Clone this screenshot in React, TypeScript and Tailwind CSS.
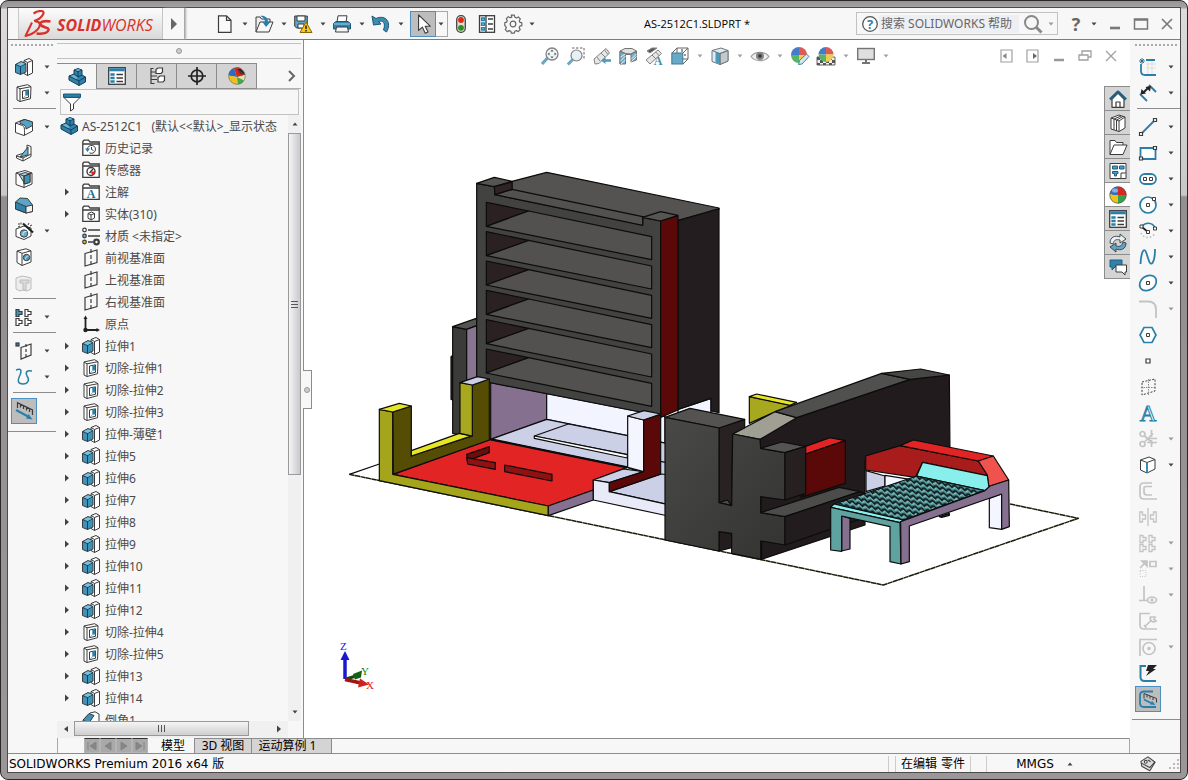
import clsx from "clsx";
import { useState, type ReactNode } from "react";

const INK = "#3c3c3c";
const BLUE = "#2a7fa8";
const PALE = "#c4c4c4";

// All glyphs are drawn on an 18x18 grid.
const glyphs: Record<string, ReactNode> = {
  extrude: (
    <g stroke={INK} strokeLinejoin="round">
      <path d="M9 2.500l5-2 3.500 2v12.500l-5 2.500-3.500-2z" fill="#fff" />
      <path d="M9 2.500l3.500 2v13M12.500 4.500l5-2" fill="none" />
      <path d="M.5 6.500L6 3.500l5 2v8.500l-5.500 2.500-5-2z" fill="#3f93b9" />
      <path d="M.5 6.500l5 2 5.500-3M5.500 8.500v8" fill="none" stroke="#123f56" />
      <path d="M1.800 6.400L6 4.300l4 1.400-4.300 2.200z" fill="#7cc0dc" stroke="none" />
    </g>
  ),
  cut: (
    <g stroke={INK} strokeLinejoin="round">
      <path d="M2 3L12.500.700l3.500 2-.5 12L5 17.500l-3-1.500z" fill="#fff" />
      <path d="M2 3l3 1.800 11-2.100M5 4.800v12.500" fill="none" />
      <path d="M7.500 7l6-1.200v7.500l-6 1.400z" fill="#fff" />
      <path d="M10.300 6.800v5l3-.6V6z" fill={BLUE} stroke="none" />
      <path d="M8 14l2.300-2.200 3-.6" fill="none" stroke="#8fb9cb" />
    </g>
  ),
  fillet: (
    <g stroke={INK} strokeLinejoin="round">
      <path d="M.5 5L9 1.500 17.500 4v9L9 17.500l-8.500-3z" fill="#fff" />
      <path d="M.5 5l7 2.500c2 1 2 2 2 9.500" fill="none" />
      <path d="M5 3.200l5-1.700 7.500 2.500v3.500L11 11c0-3-1-4-6-5.500z" fill="#56a3c5" />
    </g>
  ),
  rib: (
    <g stroke={INK} strokeLinejoin="round">
      <path d="M12 1l4 1.500v10L8 17l-6.500-3v-2.500L12 8z" fill="#fff" />
      <path d="M1.500 12L8 14l8-4M8 14v3" fill="none" />
      <path d="M13 3v8l-8 2z" fill="#67b1d0" />
    </g>
  ),
  shell: (
    <g stroke={INK} strokeLinejoin="round">
      <path d="M1 3l9-2.500L17 3v11l-8 3.500-8-3z" fill="#fff" />
      <path d="M4 4.500l6-2L15 4v8l-5 2z" fill="#a9d4e6" />
      <path d="M9 6l6-2v8.500l-6 1.500z" fill="#3f93b9" />
      <path d="M1 3l8 3v11.500M9 6l8-3" fill="none" />
    </g>
  ),
  draft: (
    <g stroke={INK} strokeLinejoin="round">
      <path d="M.5 6L5 2l7.500.5L17.500 9v6.500L11 17 .5 13z" fill="#5ba6c8" />
      <path d="M.5 6L11 10.500V17L.5 13z" fill="#2f83aa" />
      <path d="M11 10.500l6.500-1.500v6.500L11 17z" fill="#f1f1f1" />
    </g>
  ),
  wizard: (
    <g stroke={INK} strokeLinejoin="round">
      <path d="M1 7l8-3 7 2v8l-7 3.500-8-3z" fill="#fff" />
      <circle cx="9" cy="11.500" r="3.700" fill="#67b1d0" />
      <path d="M8 13a3 3 0 0 1 3.500-3.500" fill="none" stroke="#e6f5fb" />
      <path d="M8 1.500l10 9" strokeWidth="2.200" stroke="#222" />
      <path d="M3 2h2M6 .5v2M14 1l-1 2M17 3l-2 1M5 4l-2 1" />
    </g>
  ),
  hole: (
    <g stroke={INK} strokeLinejoin="round">
      <path d="M2 3L11 .800l5 2V14l-9 3.500-5-3z" fill="#fff" />
      <path d="M2 3l5 2.300 9-2.500M7 5.300v12" fill="none" />
      <circle cx="11.500" cy="9.500" r="3.200" fill="#4b9cc0" />
      <path d="M10.500 11.500a3 3 0 0 1 3-3.500" fill="none" stroke="#d6eef7" />
    </g>
  ),
  intersect: (
    <g stroke="#bdbdbd" fill="#ededed" strokeLinejoin="round">
      <path d="M1 4l6-2 5 1 4 1v11l-4 2-4-1-3 1-4-2z" />
      <path d="M5 6h9v3h-3v7H8V9H5z" fill="#d9d9d9" />
    </g>
  ),
  pattern: (
    <g stroke={INK} strokeWidth="1.200" fill="#fff">
      <path d="M1 1.500h3v2h3v3H4v2H1z" fill="#3f93b9" />
      <path d="M10 1.500h3v2h3v3h-3v2h-3zM1 10.500h3v2h3v3H4v2H1zM10 10.500h3v2h3v3h-3v2h-3z" />
    </g>
  ),
  refGeometry: (
    <g stroke={INK} fill="none" strokeWidth="1.200">
      <path d="M6 5.500l10-3.500v11L6 17z" />
      <path d="M11 2v15" strokeDasharray="3 2" />
      <rect x="1" y="1" width="3" height="3" fill={BLUE} />
    </g>
  ),
  curves: (
    <g fill="none" stroke={BLUE} strokeWidth="1.500">
      <path d="M1 2c5-2 6 0 4 5-3 6-2 9 3 9s7-4 4-8c-2-4 0-6 5-5" />
    </g>
  ),
  instant: (
    <g fill="none" stroke={INK} strokeWidth="1.200">
      <path d="M2.500 6V.8L17.500 8v5M5.500 2.500v3M8.500 4v3M11.500 5.500v3M14.500 7v3" />
      <path d="M1 8l13 7" stroke={BLUE} strokeWidth="2" />
      <path d="M17.500 17.500l-6.500-1 2.500-4.500z" fill={BLUE} stroke="none" />
    </g>
  ),
  part: (
    <g stroke="#153f57" strokeLinejoin="round">
      <path d="M1 8l5-2V2l4-1.500L14 2v5l3.500 2v5L11 17.500 1 12z" fill="#2f80aa" />
      <path d="M6 2l4 1.500L14 2M10 3.500V9l-4-3M10 9l4-2M1 8l10 5v4.500M11 13l6.500-4" fill="none" />
      <path d="M7 2l3-1 3 1-3 1zM2.500 8L6 6.700 10 10l-2 1z" fill="#6fb5d4" stroke="none" />
    </g>
  ),
  properties: (
    <g fill="none" stroke={INK} strokeWidth="1.300">
      <rect x=".7" y=".7" width="16.600" height="16.600" fill="#fff" />
      <path d="M1.300 2.800h15.400" stroke={BLUE} strokeWidth="3" />
      <path d="M3 7h3v1H3zM3 10.500h3v1H3zM3 14h3v1H3z" stroke={BLUE} />
      <path d="M8.500 7.500H15M8.500 11H15M8.500 14.500H15" />
    </g>
  ),
  config: (
    <g fill="#fff" stroke={INK} strokeWidth="1.200">
      <path d="M5.500 1.500H3v15h3.500M3 9h6M3 5h5M3 12.500h6" fill="none" />
      <path d="M8 2.500l2-1.500h4.500v4L13 6.500H8z" />
      <path d="M10 10.500L12 9h4.500v4.500L15 15h-5z" />
    </g>
  ),
  target: (
    <g fill="none" stroke="#222" strokeWidth="1.700">
      <circle cx="9" cy="9" r="5.800" />
      <path d="M9 0v18M0 9h18" />
    </g>
  ),
  ball: (
    <g>
      <path d="M9 9V.5A8.500 8.500 0 0 0 .7 8c3 1.500 5 1.500 8.300 1z" fill="#2f6fc4" />
      <path d="M9 9V.5A8.500 8.500 0 0 1 17.500 9z" fill="#d8281f" />
      <path d="M9 9h8.500A8.500 8.500 0 0 1 9 17.500z" fill="#33a24a" />
      <path d="M9 9v8.500A8.500 8.500 0 0 1 .6 8C4 9 6 9 9 9z" fill="#f1c21b" />
      <circle cx="9" cy="9" r="8.200" fill="none" stroke="#555" strokeWidth=".7" />
      <ellipse cx="6" cy="4.500" rx="3" ry="2" fill="#fff" opacity=".45" />
    </g>
  ),
  displayBall: (
    <g>
      <path d="M9 10L6 1C3 2 .5 5 .5 8.500z" fill="#2d6ac2" />
      <path d="M9 10L6 1c3-1 5-.8 7 .3l2.500 8z" fill="#cf2720" />
      <path d="M9 10l8-2c.8 3-.5 5-2 7z" fill="#e6dfae" />
      <path d="M.5 8.500L9 10l1 7.500C5 18 0 14 .5 8.500z" fill="#eac11f" />
      <path d="M9 10l1 7.500c3-.5 5-1.500 6-4z" fill="#44a84f" />
      <path d="M9.500 2.500C12 1 16 3 17 8c-3-.5-6-2-7.500-5.500z" fill="#222" />
      <path d="M10 3l6 4.500" stroke="#a33" />
      <circle cx="9" cy="9" r="8.300" fill="none" stroke="#666" strokeWidth=".6" />
    </g>
  ),
  filter: (
    <g stroke={INK} strokeLinejoin="round">
      <path d="M1 4.500L7.500 11v7l3-2v-5L17 4.500z" fill="#fff" />
      <path d="M.5 1h17v3.300H.5z" fill={BLUE} stroke="#1c5875" />
    </g>
  ),
  history: (
    <g fill="none">
      <path d="M.8 16.300V2.500L2 1.200h4.500L8 3h9.200v13.300zM.8 5h16.400" fill="#fff" stroke={INK} strokeWidth="1.300" />
      <path d="M5.500 10a4 4 0 1 1 2 3.800" stroke={INK} />
      <path d="M9.500 8v2.500l2 1" stroke={INK} />
      <path d="M3 9.500h5l-2.500 3.500z" fill={BLUE} />
    </g>
  ),
  sensor: (
    <g fill="none">
      <path d="M.8 16.300V2.500L2 1.200h4.500L8 3h9.200v13.300zM.8 5h16.400" fill="#fff" stroke={INK} strokeWidth="1.300" />
      <circle cx="9" cy="10.500" r="4" stroke={INK} strokeWidth="1.400" />
      <path d="M9 10.500h4a4 4 0 0 1-3 3.800z" fill="#e2231a" />
      <path d="M7.500 12l3.500-4" stroke={INK} strokeWidth="1.300" />
    </g>
  ),
  annotation: (
    <g>
      <path d="M.8 16.300V2.500L2 1.200h4.500L8 3h9.200v13.300zM.8 5h16.400" fill="#fff" stroke={INK} strokeWidth="1.300" />
      <text x="9" y="15" textAnchor="middle" fontSize="12" fontWeight="bold" fontFamily="Liberation Serif, serif" fill="#256f95">A</text>
    </g>
  ),
  solids: (
    <g>
      <path d="M.8 16.300V2.500L2 1.200h4.500L8 3h9.200v13.300zM.8 5h16.400" fill="#fff" stroke={INK} strokeWidth="1.300" />
      <path d="M6 8.500L9.500 7 12.500 8.500v4.500L9 15l-3-1.800zM6 8.500l3 1.400 3.500-1.400M9 10v5" fill="none" stroke={INK} />
    </g>
  ),
  material: (
    <g stroke={INK} strokeWidth="1.200">
      <circle cx="2.500" cy="3" r="1.800" fill="#fff" />
      <circle cx="2.500" cy="9" r="1.800" fill="#69b4d6" />
      <circle cx="2.500" cy="15" r="1.800" fill="#f2b90f" />
      <path d="M6 3h12M6 9h12M6 15h5" strokeWidth="1.600" />
      <circle cx="14.500" cy="15" r="2.300" fill="#fff" strokeWidth="2.200" />
    </g>
  ),
  plane: (
    <g stroke={INK} fill="none" strokeWidth="1.200">
      <path d="M3 4.500L15 1v12.500L3 17z" />
      <path d="M9 0v18" strokeDasharray="4 2" />
    </g>
  ),
  origin: (
    <g stroke="#222" strokeWidth="1.800" fill="#222">
      <path d="M3.500 3v12H15" fill="none" />
      <path d="M3.500.5L5.500 4h-4zM18 15l-3.500-2v4z" stroke="none" />
      <circle cx="3.500" cy="15" r="1.300" />
    </g>
  ),
  chamfer: (
    <g stroke={INK} strokeLinejoin="round">
      <path d="M1 9L8 2l5-1.200L17 3v10l-8 3.500L1 14z" fill="#fff" />
      <path d="M1 9L7 2.500l5 2L7 12z" fill="#3f93b9" />
    </g>
  ),
  newDoc: <path d="M2.500 .8h8l4.500 4.500v12H2.500zM10.500 .8v4.500H15" fill="#fafafa" stroke={INK} strokeWidth="1.200" />,
  open: (
    <g stroke={INK} strokeLinejoin="round">
      <path d="M1 17V2h4l1.500 2H15v4" fill="#eee" />
      <path d="M1 17l4-10h13l-4 10z" fill="#f8f8f8" />
      <path d="M5 1c4-1 8 1 8 6h2.500L11 12 7.500 7H10c0-3-2-5-5-6z" fill={BLUE} stroke="none" />
    </g>
  ),
  save: (
    <g strokeLinejoin="round">
      <path d="M.7 1h12.600v12H2.500L.7 11z" fill="#5ba6c8" stroke={INK} />
      <path d="M3 1h8v5H3zM4 9h6v4H4z" fill="#fff" stroke={INK} />
      <path d="M12 7l6 10.500H6z" fill="#f8c815" stroke="#8a6a00" />
      <path d="M12 10.500v3.500M12 15v1.400" stroke="#222" strokeWidth="1.500" />
    </g>
  ),
  print: (
    <g stroke={INK} strokeLinejoin="round">
      <path d="M4 7L5 .8h9L13 7" fill="#fff" />
      <path d="M.5 8.500L3 6.500h12l2.500 2v5.500H.5z" fill="#2f83aa" stroke="#1d5874" />
      <path d="M1 9h16" stroke="#a5d4e8" />
      <path d="M3.500 12h11l1 5h-13z" fill="#f5f5f5" />
    </g>
  ),
  undo: <path d="M0 1l1.500 9L9 9 6.500 6.500C11 5 14 8 11.500 15l3 2C20 8 14-1 4 3.500z" fill="#3d8db3" stroke="#1d5874" />,
  cursor: <path d="M5 .8v14l3.500-3 2.500 5.500 2.500-1.200L11 11h4.500z" fill="#fff" stroke={INK} strokeLinejoin="round" />,
  traffic: (
    <g>
      <rect x="4.700" y=".7" width="8.600" height="16.600" rx="4" fill="#ddd" stroke="#444" strokeWidth="1.300" />
      <circle cx="9" cy="5" r="2.900" fill="#dd2c12" />
      <circle cx="9" cy="12.800" r="2.900" fill="#2f8e1d" />
    </g>
  ),
  options: (
    <g fill="none" stroke={INK} strokeWidth="1.300">
      <rect x="1.500" y=".7" width="15" height="16.600" fill="#fff" />
      <path d="M8 1v16M10 4h5M10 9h5M10 14h5" />
      <path d="M3.500 3h3v2.500h-3zM3.500 7.800h3v2.500h-3zM3.500 12.600h3V15h-3z" fill="#8ac6df" stroke={BLUE} />
    </g>
  ),
  gear: (
    <g fill="none" stroke="#666" strokeWidth="1.200" strokeLinejoin="round">
      <path d="M7.500 1h3l.5 2 1.700.7 1.800-1 2 2-1 1.800.7 1.700 1.800.3v3l-2 .5-.6 1.600 1 1.800-2 2-1.800-1-1.600.7-.5 1.900h-3l-.5-2-1.600-.6-1.900 1-2-2 1-1.800-.7-1.600L1 11.500v-3L2.800 8l.7-1.700-1-1.800 2-2 1.800 1L8 3z" transform="translate(-.2 -.8)" />
      <circle cx="9" cy="9" r="2.800" />
    </g>
  ),
  zoomFit: (
    <g fill="none">
      <path d="M1 17l5.500-6" stroke="#5a9dbb" strokeWidth="3.200" />
      <circle cx="11" cy="7" r="6" fill="#f1f5f7" stroke="#777" strokeWidth="1.300" />
      <path d="M11 2.500l1.500 2h-3zM11 11.500l1.500-2h-3zM6.500 7l2-1.500v3zM15.500 7l-2-1.500v3z" fill="#444" />
    </g>
  ),
  zoomArea: (
    <g fill="none">
      <path d="M5 1h12v12" stroke="#555" strokeDasharray="2.500 1.500" />
      <path d="M.8 17.500l5-5" stroke="#5a9dbb" strokeWidth="3" />
      <circle cx="9.500" cy="8.500" r="5.500" fill="#e4eff3" stroke="#777" strokeWidth="1.200" />
    </g>
  ),
  prevView: (
    <g stroke="#777" strokeLinejoin="round">
      <path d="M1 12L13 1.500 16.500 6 6 16.500l-4 .5z" fill="#e4e4e4" />
      <path d="M8 6l4 4M11.500 3l3.500 4.500M4 10l3 4" />
      <path d="M8 13.500L12.500 10v2.300H18v2.500h-5.500V17z" fill="#3b8db3" stroke="none" />
    </g>
  ),
  section: (
    <g stroke="#666" strokeLinejoin="round">
      <path d="M1 4l5-2.500h7L17.500 4v8l-5 1V7.500H6.500V15L1 17z" fill="#ddd" />
      <path d="M1 4.500l5.500 2V17L1 17zM12 7l5.500-2.500V13L12 15z" fill="#61a9c7" />
      <path d="M1.500 10l5-3M1.500 14l5-5M2 17l4.500-4M12.500 12l5-5M12.500 14.500l5-5" stroke="#fff" strokeWidth=".8" />
      <path d="M1 4l5.500 2.500 5.500.5 5.500-3" fill="none" />
    </g>
  ),
  annotView: (
    <g stroke="#777" strokeLinejoin="round">
      <path d="M2 4l5-3h5L5 6z" fill="#444" />
      <path d="M1 13L13 3l3.500 3.500L5 17z" fill="#e4e4e4" />
      <path d="M7 8l4 4M10.500 5l4 4" />
      <text x="13" y="17.500" textAnchor="middle" fontSize="12" fontWeight="bold" fontFamily="Liberation Serif, serif" fill="#2f83aa" stroke="none">A</text>
    </g>
  ),
  orient: (
    <g stroke="#555" fill="none">
      <path d="M1 6l5-5h11v11l-5 5M6 1v11M12 6l5-5M6 12h11M6 12l-5 5" />
      <rect x=".8" y="6" width="11" height="11" fill="#57a0c0" stroke="#2d6d8b" />
      <path d="M11 2v3M15 8h-2" stroke="#222" />
    </g>
  ),
  displayStyle: (
    <g stroke="#666" strokeLinejoin="round">
      <path d="M1 3.500L10 1l7 2.500V14l-8 3.500-8-3z" fill="#d6ecf4" />
      <path d="M9 6.500l8-3V14l-8 3.500z" fill="#b9c6cc" />
      <path d="M4.500 5v10.500L9 17V6.500z" fill="#3b8db3" stroke="none" />
      <path d="M1 3.500l8 3 8-3M9 6.500v11" fill="none" />
    </g>
  ),
  eye: (
    <g fill="none" stroke="#999" strokeWidth="1.200">
      <path d="M0 9.500C4 4 14 4 18 9.500 14 15 4 15 0 9.500z" fill="#eee" />
      <circle cx="9" cy="9" r="4" fill="#777" stroke="none" />
      <circle cx="9" cy="9" r="1.800" fill="#222" stroke="none" />
    </g>
  ),
  appearance: (
    <g>
      <path d="M8 8V0A8 8 0 0 0 0 8z" fill="#2f6fc4" />
      <path d="M8 8V0a8 8 0 0 1 8 8z" fill="#d94a43" />
      <path d="M8 8H0a8 8 0 0 0 8 8z" fill="#45ad58" />
      <path d="M8 8h8a8 8 0 0 1-8 8z" fill="#ebc83d" />
      <path d="M7.500 17.500l1-4L15.500 7 18 9.500 11 17z" fill="#cfe6ef" stroke="#2d7398" />
    </g>
  ),
  scene: (
    <g>
      <path d="M0 10h18v8H0z" fill="#eee" stroke="#555" />
      <path d="M0 10h3v3H0zM3 13h3v3H3zM0 16h3v2H0zM6 16h3v2H6zM9 14h3v2H9zM12 16h3v2h-3zM15 13h3v3h-3zM12 11h3v2h-3z" fill="#444" />
      <path d="M9 7.500V0a7.500 7.500 0 0 0-7.500 7.500z" fill="#2f6fc4" />
      <path d="M9 7.500V0a7.500 7.500 0 0 1 7.500 7.500z" fill="#d94a43" />
      <path d="M9 7.500H1.500A7.500 7.500 0 0 0 9 15z" fill="#45ad58" />
      <path d="M9 7.500h7.500A7.500 7.500 0 0 1 9 15z" fill="#ebc83d" />
    </g>
  ),
  monitor: (
    <g stroke="#666" strokeWidth="1.400">
      <rect x=".7" y="1.500" width="16.600" height="11" fill="#dcdcdc" />
      <path d="M9 12.500v3M5 16h8" strokeWidth="2" />
    </g>
  ),
  dockLeft: (
    <g fill="none" stroke="#a0a0a0" strokeWidth="1.200">
      <path d="M3 3h11v12H3z" />
      <path d="M8.500 6v6L4.500 9z" fill="#888" stroke="none" />
    </g>
  ),
  dockRight: (
    <g fill="none" stroke="#a0a0a0" strokeWidth="1.200">
      <path d="M3 3h11v12H3z" />
      <path d="M9 6v6l4-3z" fill="#666" stroke="none" />
    </g>
  ),
  minimizeDoc: <path d="M4 13h10" stroke="#999" strokeWidth="2.500" />,
  restoreDoc: <path d="M3 8h9v5H3zM6 8V4h9v6h-3" fill="none" stroke="#a0a0a0" strokeWidth="1.300" />,
  closeDoc: <path d="M4 4l10 10M14 4L4 14" stroke="#a0a0a0" strokeWidth="1.300" />,
  minimize: <path d="M4 13h10" stroke="#777" strokeWidth="2.600" />,
  maximize: <path d="M2.500 4h13v10h-13zM2 5h14" fill="none" stroke="#777" strokeWidth="1.500" />,
  close: <path d="M4 4l10 10M14 4L4 14" stroke="#777" strokeWidth="1.600" />,
  home: (
    <g strokeLinejoin="round">
      <path d="M3 9v8.300h12V9L9 3z" fill="#fff" stroke={INK} strokeWidth="1.200" />
      <path d="M7 17v-5h4v5" fill="none" stroke={INK} strokeWidth="1.200" />
      <path d="M1 9.500L9 1.800l8 7.700" fill="none" stroke="#225f7e" strokeWidth="2.600" />
    </g>
  ),
  library: (
    <g stroke={INK} fill="#fff" strokeLinejoin="round">
      <path d="M2 4l8-3 6 2v11l-6 3.500-8-2.500z" />
      <path d="M2 4l3 1 7-3M5 5v11M7.500 6v11M5 5l2.500 1L14 2.500M7.500 6l2.500 1 6-4M10 7v10.500" fill="none" />
    </g>
  ),
  explorer: (
    <g stroke={INK} fill="#fff" strokeLinejoin="round">
      <path d="M1 16.500V2.500h5l1.500 2H14V7" />
      <path d="M1 16.500L5 7h13l-4 9.500z" />
    </g>
  ),
  palette: (
    <g stroke={INK} fill="#fff">
      <path d="M1 1.500h16v15H1z" />
      <path d="M3.500 4h5v3h-5zM10.500 4H15v3h-4.500zM3.500 9.500H9v2H7.500V14h-2v-2.500h-2z" fill="#4b9cc0" stroke="#225f7e" />
      <path d="M12 16.500V11h5" />
    </g>
  ),
  refresh: (
    <g strokeLinejoin="round" stroke={INK} strokeWidth=".9">
      <path d="M1 9c0-6 5-8 10-6V0l6 5-6 4V6C7 5 5 6 4 10z" fill="#e6f1f5" />
      <path d="M17 9c0 6-5 8-10 6v3l-6-5 6-4v3c4 1 6 0 7-4z" fill="#5ba6c8" />
    </g>
  ),
  forum: (
    <g stroke={INK} strokeLinejoin="round">
      <path d="M1 2h12v7H6l-3 3V9H1z" fill="#2f83aa" stroke="#225f7e" />
      <path d="M7 7h10.500v7H16v3l-3-3H7z" fill="#fff" />
    </g>
  ),
  sketch: (
    <g fill="none">
      <path d="M7 6h10M7 10h10M9 2v14M13 2v14" stroke="#ddd" />
      <path d="M7 2h9M2 6v7q0 4 4 4h11" stroke={BLUE} strokeWidth="1.800" />
      <path d="M3 0v6M0 3h6M1 1l4 4M5 1L1 5" stroke="#24627f" strokeWidth=".9" />
    </g>
  ),
  dimension: (
    <g fill="none">
      <path d="M1 10l7 7M10 1l7 7" stroke={BLUE} strokeWidth="1.900" />
      <path d="M4 9l6-6" stroke="#222" strokeWidth="2" />
      <path d="M1.500 10.500L2.500 5l4.500 4.500zM12 2l-1 5.500L6.500 3z" fill="#222" />
    </g>
  ),
  line: (
    <g fill="#fff">
      <path d="M1.500 16.500l15-15" stroke={BLUE} strokeWidth="1.800" />
      <path d="M.5 14.500h3v3h-3zM14.500.5h3v3h-3z" stroke={INK} strokeWidth="1.200" />
    </g>
  ),
  rect: (
    <g fill="#fff">
      <path d="M1.500 4h15v11h-15z" stroke={BLUE} strokeWidth="1.800" />
      <path d="M.5 13h3v3h-3zM14.500 2.500h3v3h-3z" stroke={INK} strokeWidth="1.200" />
    </g>
  ),
  slot: (
    <g fill="#fff">
      <rect x="1" y="4" width="16" height="10" rx="5" stroke={BLUE} strokeWidth="1.800" />
      <path d="M4.500 7.500h3v3h-3zM10.500 7.500h3v3h-3z" stroke={INK} />
    </g>
  ),
  circle: (
    <g fill="#fff">
      <circle cx="9" cy="9" r="8" stroke={BLUE} strokeWidth="1.700" />
      <path d="M7.500 7.500h3v3h-3zM13.500 1.500h3v3h-3z" stroke={INK} />
    </g>
  ),
  arc: (
    <g fill="#fff">
      <path d="M2 11a7.500 7 0 0 0 14 0" fill="none" stroke="#bbb" strokeWidth="1.500" strokeDasharray="1.500 2" />
      <path d="M3 4.500c3-4.500 10-4.500 13 1" fill="none" stroke={BLUE} strokeWidth="1.700" />
      <path d="M3 5l6 5" stroke="#222" strokeWidth="1.700" />
      <path d="M1 3h3v3H1zM7.500 8.500h3v3h-3zM14.500 5h3v3h-3z" stroke={INK} />
    </g>
  ),
  spline: <path d="M1.500 16C2 4 5-1 7 4l3 9c2 6 6 2 6-12" fill="none" stroke={BLUE} strokeWidth="1.800" />,
  ellipse: (
    <g fill="#fff">
      <ellipse cx="9" cy="9" rx="9" ry="7" transform="rotate(-35 9 9)" stroke={BLUE} strokeWidth="1.700" />
      <path d="M7.500 7.500h3v3h-3z" stroke={INK} />
    </g>
  ),
  sketchFillet: <path d="M0 1.500h9q8 0 8 8V18" fill="none" stroke={PALE} strokeWidth="1.800" />,
  polygon: (
    <g fill="#fff">
      <path d="M5 1.500h8L17 9l-4 7.500H5L1 9z" stroke={BLUE} strokeWidth="1.700" />
      <path d="M7.500 7.500h3v3h-3z" stroke={INK} />
    </g>
  ),
  point: <path d="M7 7h4v4H7z" fill="#fff" stroke={INK} strokeWidth="1.200" />,
  mirrorBox: (
    <g fill="none" stroke={INK}>
      <path d="M3 4l13-3v12L3 17z" strokeDasharray="2 1.500" />
      <path d="M9.500 1v16M2 9.500h14" stroke="#888" strokeDasharray="1.500 1" />
    </g>
  ),
  text: (
    <text x="9" y="17" textAnchor="middle" fontSize="23" fontFamily="Liberation Serif, serif" fill="#e8f3f8" stroke={BLUE} strokeWidth="1">A</text>
  ),
  trim: (
    <g fill="none" stroke={PALE} strokeWidth="1.700">
      <circle cx="3.500" cy="4" r="2.500" />
      <circle cx="3.500" cy="14" r="2.500" />
      <path d="M5 5.500l9 8M5 12.500l9-9M12.500 0v7M8 8.500h10M8 12.500h10M12.500 10v7" />
    </g>
  ),
  convert: (
    <g stroke={INK} strokeLinejoin="round">
      <path d="M1.500 4L10 1l6 2.500V13l-8 4-6.500-3z" fill="#fff" />
      <path d="M1.500 4L8 6.500l8-3" fill="none" />
      <path d="M8 6.500V17" stroke={BLUE} strokeWidth="1.800" />
    </g>
  ),
  offset: <path d="M13 1H5Q1 1 1 5v8q0 4 4 4h13M13 4.500H7Q5 4.500 5 6.500V10q0 3 3 3h5" fill="none" stroke={PALE} strokeWidth="1.700" />,
  mirror: (
    <path d="M9 0v18M.8 4h2.700v3h3v4h-3v3H.8zM17.200 4h-2.700v3h-3v4h3v3h2.700z" fill="none" stroke={PALE} strokeWidth="1.300" />
  ),
  linear: (
    <path d="M1 1.500h3v2h3v3H4v2H1zM10 1.500h3v2h3v3h-3v2h-3zM1 10.500h3v2h3v3H4v2H1zM10 10.500h3v2h3v3h-3v2h-3z" fill="none" stroke={PALE} strokeWidth="1.300" />
  ),
  move: (
    <g fill="none" stroke={PALE} strokeWidth="1.700">
      <path d="M11 1.500h6v5h-6zM1 8l5-5" />
      <path d="M3 1h5v5z" fill={PALE} />
      <path d="M1 10.500h6v6H1z" strokeDasharray="1 1.500" strokeWidth="1" />
    </g>
  ),
  relations: (
    <g fill="none" stroke={PALE} strokeWidth="1.700">
      <path d="M5 0v14M0 14.500h8" />
      <ellipse cx="13" cy="14" rx="4.500" ry="3" />
      <circle cx="13" cy="14" r=".8" />
    </g>
  ),
  repair: (
    <g fill="none" stroke={PALE} strokeWidth="1.700">
      <path d="M11 1.500H1V13q0 4 4 4h13" />
      <path d="M6 14.500l6-6M11.500 5c-1 4 2 6 5.500 4l-2-1.500 1-2.500zM5 13l2.500 3" />
    </g>
  ),
  snaps: (
    <g fill="none" stroke={PALE} strokeWidth="1.700">
      <path d="M1 18V1.500h17" />
      <circle cx="10" cy="10.500" r="6" />
      <circle cx="10" cy="10.500" r="1" />
    </g>
  ),
  rapid: (
    <g fill="none">
      <path d="M7 2H1.500v11q0 4 4 4H17" stroke={BLUE} strokeWidth="2" />
      <path d="M9 1h9l-4 4h3L7 12l3-5H7z" fill="#222" />
    </g>
  ),
  instant2d: (
    <g fill="none">
      <path d="M14 1.500H5q-4 0-4 4V13q0 4 4 4h12" stroke={BLUE} strokeWidth="1.800" />
      <path d="M5 8.500V3.500l12.500 5v4M8 5v2.500M11 6v2.500M14 7.500v2.500" stroke={INK} />
      <path d="M5 9.500l8 4" stroke={BLUE} strokeWidth="1.800" />
      <path d="M16.500 15l-5.500-.5 2-3.500z" fill={BLUE} />
    </g>
  ),
  tag: (
    <g fill="#ddd" stroke="#444" strokeWidth="1.200" strokeLinejoin="round">
      <path d="M1 6l8-5 8 6-6 9.500-9-5z" />
      <path d="M1.500 8l9.500 5 5.500-6" fill="none" />
      <circle cx="6.500" cy="6.500" r="1.600" fill="#fff" />
      <path d="M9 4.500l3 2" />
    </g>
  ),
};

type IconProps = { name: string; className?: string };

const Icon = ({ name, className }: IconProps) => (
  <svg viewBox="0 0 18 18" aria-hidden="true" className={clsx("shrink-0 overflow-visible", className ?? "size-[18px]")}>
    {glyphs[name]}
  </svg>
);

const Caret = ({ dim, dir = "down" }: { dim?: boolean; dir?: "down" | "up" | "left" | "right" }) => (
  <svg viewBox="0 0 8 8" aria-hidden="true" className={clsx("size-2 shrink-0", dim ? "text-[#999]" : "text-[#444]")}>
    {dir === "down" && <path d="M1.500 2.500h5L4 5.500z" fill="currentColor" />}
    {dir === "up" && <path d="M1.500 5.500h5L4 2.500z" fill="currentColor" />}
    {dir === "left" && <path d="M6 1v6L2 4z" fill="currentColor" />}
    {dir === "right" && <path d="M2 .5v7L6 4z" fill="currentColor" />}
  </svg>
);

type Tool = { icon: string; label: string; menu?: boolean; off?: boolean; active?: boolean; rule?: boolean };

const featureTools: Tool[] = [
  { icon: "extrude", label: "拉伸凸台", menu: true },
  { icon: "cut", label: "拉伸切除", menu: true, rule: true },
  { icon: "fillet", label: "圆角", menu: true },
  { icon: "rib", label: "筋" },
  { icon: "shell", label: "抽壳" },
  { icon: "draft", label: "拔模" },
  { icon: "wizard", label: "异型孔向导", menu: true },
  { icon: "hole", label: "孔" },
  { icon: "intersect", label: "相交", off: true, rule: true },
  { icon: "pattern", label: "线性阵列", menu: true, rule: true },
  { icon: "refGeometry", label: "参考几何体", menu: true },
  { icon: "curves", label: "曲线", menu: true, rule: true },
  { icon: "instant", label: "Instant3D", active: true },
];

const sketchTools: Tool[] = [
  { icon: "sketch", label: "草图绘制", menu: true },
  { icon: "dimension", label: "智能尺寸", menu: true, rule: true },
  { icon: "line", label: "直线", menu: true },
  { icon: "rect", label: "边角矩形", menu: true },
  { icon: "slot", label: "直槽口", menu: true },
  { icon: "circle", label: "圆", menu: true },
  { icon: "arc", label: "圆心/起/终点画弧", menu: true },
  { icon: "spline", label: "样条曲线", menu: true },
  { icon: "ellipse", label: "椭圆", menu: true },
  { icon: "sketchFillet", label: "绘制圆角", menu: true, off: true },
  { icon: "polygon", label: "多边形" },
  { icon: "point", label: "点" },
  { icon: "mirrorBox", label: "基准面" },
  { icon: "text", label: "文字" },
  { icon: "trim", label: "剪裁实体", menu: true, off: true },
  { icon: "convert", label: "转换实体引用", menu: true },
  { icon: "offset", label: "等距实体", off: true },
  { icon: "mirror", label: "镜向实体", off: true },
  { icon: "linear", label: "线性草图阵列", menu: true, off: true },
  { icon: "move", label: "移动实体", menu: true, off: true },
  { icon: "relations", label: "显示/删除几何关系", menu: true, off: true },
  { icon: "repair", label: "修复草图", off: true },
  { icon: "snaps", label: "快速捕捉", menu: true, off: true },
  { icon: "rapid", label: "快速草图" },
  { icon: "instant2d", label: "Instant2D", active: true },
];

function ToolColumn({ tools, label }: { tools: Tool[]; label: string }) {
  return (
    <div role="toolbar" aria-label={label} aria-orientation="vertical" className="flex w-12 shrink-0 flex-col">
      <div className="mx-[3px] mt-1 mb-2 h-0.5 border-t-2 border-dotted border-[#aaa]" />
      {tools.map((t) => (
        <div key={t.icon}>
          <div className="flex h-[26px] items-center pl-[3px]">
            <button
              type="button"
              aria-label={t.label}
              disabled={t.off}
              className={clsx(
                "flex size-[26px] items-center justify-center border",
                t.active ? "border-[#4a90c0] bg-[#bdbdbd]" : "border-transparent"
              )}
            >
              <Icon name={t.icon} />
            </button>
            {t.menu && (
              <button type="button" aria-label={`${t.label}选项`} disabled={t.off} className="ml-1.5 flex">
                <Caret dim={t.off} />
              </button>
            )}
          </div>
          {t.rule && <div className="mt-0.5 mb-[5px] ml-[5px] h-px bg-[#8c8c8c]" />}
        </div>
      ))}
      <div className="mt-[7px] h-px bg-[#8c8c8c]" />
    </div>
  );
}

const fileTools = [
  { icon: "newDoc", label: "新建" },
  { icon: "open", label: "打开" },
  { icon: "save", label: "保存" },
  { icon: "print", label: "打印" },
  { icon: "undo", label: "撤消" },
];

function Logo() {
  return (
    <div className="ml-2.5 flex h-full w-[145px] items-center border-x border-[#c8c8c8] bg-gradient-to-b from-[#fdfdfd] to-[#d9d9d9] pl-1">
      <svg viewBox="0 0 30 28" aria-hidden="true" className="h-7 w-[30px] shrink-0" fill="none" stroke="#d8322a" strokeLinejoin="round">
        <path d="M10.500 3.500C16 0 22.500 0 20 4.500c-2 3.500-5 5.500-9 6.500" strokeWidth="2.200" />
        <path d="M12 11.500c6-.5 6 4.500 2 8.500-3 3-7 5-11.500 6L9 12.500" strokeWidth="2" />
        <path d="M27.500 11.500c-6-1-11 0-10 3s9 2.500 8 5.500c-1 3.500-7 4-12 3.500" strokeWidth="2.600" />
      </svg>
      <span className="ml-1 pt-0.5 font-['Open_Sans',sans-serif] text-[16px] leading-5 text-[#d8322a] italic">
        <b className="font-bold">SOLID</b>WORKS
      </span>
    </div>
  );
}

function TitleBar() {
  return (
    <header className="flex h-8 shrink-0 items-center border-b border-[#7d7d7d] bg-[#f7f7f7]">
      <Logo />
      <button type="button" aria-label="展开菜单" className="flex h-full w-[22px] items-center justify-center border-r border-[#a8a8a8] shadow-[1px_0_2px_#aaa]">
        <svg viewBox="0 0 8 14" aria-hidden="true" className="h-3.5 w-2"><path d="M1 1v12l6-6z" fill="#666" /></svg>
      </button>
      <div className="ml-[30px] flex items-center">
        {fileTools.map((t) => (
          <div key={t.icon} className="flex items-center">
            <button type="button" aria-label={t.label} className="flex w-5 justify-center">
              <Icon name={t.icon} />
            </button>
            <button type="button" aria-label={`${t.label}选项`} className="flex w-[19px] justify-center">
              <Caret />
            </button>
          </div>
        ))}
        <div className="flex h-[26px] border border-[#a8a8a8]">
          <button type="button" aria-label="选择" className="-m-px flex w-[26px] items-center justify-center border border-[#4a90c0] bg-[#bdbdbd]">
            <Icon name="cursor" className="size-5" />
          </button>
          <button type="button" aria-label="选择选项" className="flex w-3 items-center justify-center">
            <Caret />
          </button>
        </div>
        {["traffic", "options", "gear"].map((n) => (
          <button key={n} type="button" aria-label={n} className="flex w-[26px] justify-center">
            <Icon name={n} />
          </button>
        ))}
        <button type="button" aria-label="选项菜单" className="flex w-3 justify-center">
          <Caret />
        </button>
      </div>
      <h1 className="flex-1 truncate pt-px text-center font-['Open_Sans','Noto_Sans_CJK_SC',sans-serif] text-[11px] text-black">AS-2512C1.SLDPRT *</h1>
      <form className="flex h-[23px] w-[202px] items-center border border-[#c2c2c2] bg-[#f7f7f7] pl-1" role="search">
        <svg viewBox="0 0 18 18" aria-hidden="true" className="size-[18px] shrink-0">
          <circle cx="9" cy="9" r="7.300" fill="#fff" stroke="#555" strokeWidth="1.300" />
          <text x="9" y="13.500" textAnchor="middle" fontSize="13" fontWeight="bold" fontFamily="Open Sans, sans-serif" fill={BLUE}>?</text>
        </svg>
        <input
          aria-label="搜索帮助"
          placeholder="搜索 SOLIDWORKS 帮助"
          className="h-[18px] w-[140px] bg-[#eeeff3] pl-0.5 text-xs text-[#555] outline-none placeholder:text-[#666]"
        />
        <button type="button" aria-label="搜索" className="ml-1 flex">
          <svg viewBox="0 0 20 20" aria-hidden="true" className="size-5" fill="none" stroke="#888">
            <circle cx="8.500" cy="8.500" r="6.500" strokeWidth="2" />
            <path d="M13 13l5.500 5.500" strokeWidth="3" />
          </svg>
        </button>
        <button type="button" aria-label="搜索范围" className="ml-1 flex">
          <Caret dim />
        </button>
      </form>
      <button type="button" aria-label="帮助" className="ml-1.5 w-6 text-center font-['Open_Sans',sans-serif] text-lg leading-6 font-bold text-[#666]">?</button>
      <button type="button" aria-label="帮助选项" className="mr-0.5 flex w-3 justify-center">
        <Caret />
      </button>
      {["minimize", "maximize", "close"].map((n) => (
        <button key={n} type="button" aria-label={n} className="flex w-[26px] justify-center">
          <Icon name={n} />
        </button>
      ))}
    </header>
  );
}

const treeItems: { icon: string; text: string; open?: boolean }[] = [
  { icon: "history", text: "历史记录" },
  { icon: "sensor", text: "传感器" },
  { icon: "annotation", text: "注解", open: true },
  { icon: "solids", text: "实体(310)", open: true },
  { icon: "material", text: "材质 <未指定>" },
  { icon: "plane", text: "前视基准面" },
  { icon: "plane", text: "上视基准面" },
  { icon: "plane", text: "右视基准面" },
  { icon: "origin", text: "原点" },
  { icon: "extrude", text: "拉伸1", open: true },
  { icon: "cut", text: "切除-拉伸1", open: true },
  { icon: "cut", text: "切除-拉伸2", open: true },
  { icon: "cut", text: "切除-拉伸3", open: true },
  { icon: "extrude", text: "拉伸-薄壁1", open: true },
  { icon: "extrude", text: "拉伸5", open: true },
  { icon: "extrude", text: "拉伸6", open: true },
  { icon: "extrude", text: "拉伸7", open: true },
  { icon: "extrude", text: "拉伸8", open: true },
  { icon: "extrude", text: "拉伸9", open: true },
  { icon: "extrude", text: "拉伸10", open: true },
  { icon: "extrude", text: "拉伸11", open: true },
  { icon: "extrude", text: "拉伸12", open: true },
  { icon: "cut", text: "切除-拉伸4", open: true },
  { icon: "cut", text: "切除-拉伸5", open: true },
  { icon: "extrude", text: "拉伸13", open: true },
  { icon: "extrude", text: "拉伸14", open: true },
  { icon: "chamfer", text: "倒角1" },
];

const panelTabs = [
  { icon: "part", label: "FeatureManager" },
  { icon: "properties", label: "PropertyManager" },
  { icon: "config", label: "ConfigurationManager" },
  { icon: "target", label: "DimXpertManager" },
  { icon: "displayBall", label: "DisplayManager" },
];

function FeaturePanel() {
  const [tab, setTab] = useState("FeatureManager");

  return (
    <aside className="relative flex w-[247px] shrink-0 flex-col border-r border-[#8c8c8c] bg-[#f7f7f7] pt-[3px]">
      <div className="mr-0.5 flex h-4 shrink-0 items-center justify-center border-y border-[#c2c2c2]">
        <span className="size-1.5 rounded-full border border-[#999] bg-[#ccc]" />
      </div>
      <div className="mt-1 mr-0.5 flex h-[26px] shrink-0 items-stretch">
        <div role="tablist" className="flex">
          {panelTabs.map((t) => (
            <button
              key={t.label}
              type="button"
              role="tab"
              aria-label={t.label}
              aria-selected={tab === t.label}
              onClick={() => setTab(t.label)}
              className={clsx(
                "flex w-10 items-center justify-center border-t border-r border-[#8c8c8c]",
                tab === t.label ? "bg-[#f7f7f7]" : "border-b bg-[#d4d4d4]"
              )}
            >
              <Icon name={t.icon} />
            </button>
          ))}
        </div>
        <button type="button" aria-label="更多" className="flex flex-1 items-center justify-end border-b border-[#b0b0b0] pr-1">
          <svg viewBox="0 0 10 12" aria-hidden="true" className="h-3 w-2.5"><path d="M2 1l5 5-5 5" fill="none" stroke="#666" strokeWidth="2" /></svg>
        </button>
      </div>
      <button type="button" aria-label="过滤器" className="mr-1 ml-[3px] flex h-[26px] shrink-0 items-center border border-[#c2c2c2] pl-0.5">
        <Icon name="filter" />
      </button>
      <div className="flex min-h-0 flex-1 pr-0.5">
        <div className="min-w-0 flex-1 overflow-hidden">
          <ul role="tree" aria-label="设计树" className="text-xs text-[#4a4a4a]">
            <li role="treeitem" aria-expanded="true" className="flex h-[22px] items-center pl-[3px] whitespace-pre">
              <Icon name="part" />
              <span className="ml-1 pt-0.5">AS-2512C1   (默认&lt;&lt;默认&gt;_显示状态</span>
            </li>
            {treeItems.map((item) => (
              <li key={item.text} role="treeitem" className="flex h-[22px] items-center pl-1.5 whitespace-pre">
                <span className="flex w-[19px]">{item.open && <Caret dir="right" />}</span>
                <Icon name={item.icon} />
                <span className="ml-[5px] pt-0.5">{item.text}</span>
              </li>
            ))}
          </ul>
        </div>
        <div className="flex w-[13px] shrink-0 flex-col items-center bg-[#f0f0f0]">
          <div className="flex h-[18px] items-center"><Caret dir="up" /></div>
          <div className="flex w-full flex-[341] flex-col items-center justify-center gap-0.5 border border-[#999] bg-gradient-to-r from-[#f5f5f5] to-[#c9c9ce]">
            <i className="h-px w-[7px] bg-[#555]" />
            <i className="h-px w-[7px] bg-[#555]" />
            <i className="h-px w-[7px] bg-[#555]" />
          </div>
          <div className="flex-[228]" />
          <div className="flex h-[18px] items-center"><Caret dir="down" /></div>
        </div>
      </div>
      <div className="flex h-[17px] w-[231px] shrink-0 items-center bg-[#f0f0f0] pb-0.5">
        <div className="flex w-[17px] justify-center"><Caret dir="left" /></div>
        <div className="flex h-[15px] w-[175px] items-center justify-center gap-0.5 border border-[#999] bg-gradient-to-b from-[#f5f5f5] to-[#cfcfcf]">
          <i className="h-[7px] w-px bg-[#555]" />
          <i className="h-[7px] w-px bg-[#555]" />
          <i className="h-[7px] w-px bg-[#555]" />
        </div>
        <div className="ml-auto flex w-[18px] justify-center"><Caret dir="right" /></div>
      </div>
      <button type="button" aria-label="隐藏面板" className="absolute top-[330px] -right-[9px] flex h-[39px] w-[9px] items-center justify-center border border-l-0 border-[#8c8c8c] bg-[#f7f7f7]">
        <span className="size-1.5 rounded-full border border-[#999] bg-[#ccc]" />
      </button>
    </aside>
  );
}

const viewTools = [
  { icon: "zoomFit" },
  { icon: "zoomArea" },
  { icon: "prevView" },
  { icon: "section" },
  { icon: "annotView" },
  { icon: "orient", menu: true },
  { icon: "displayStyle", menu: true },
  { icon: "eye", menu: true },
  { icon: "appearance" },
  { icon: "scene", menu: true },
  { icon: "monitor", menu: true },
];

const docButtons = ["dockLeft", "dockRight", "minimizeDoc", "restoreDoc", "closeDoc"];
const taskTabs = ["home", "library", "explorer", "palette", "ball", "properties", "refresh", "forum"];

type Face = [points: string, fill: string];

const faces = (list: Face[]) => list.map(([points, fill], i) => <polygon key={i} points={points} fill={fill} />);

const rearParts: Face[] = [
  ["333,590 340,585 340,720 333,718", "#2b2526"],
  ["338,500 380,508 380,830 338,820", "#3b3b39"],
  ["338,500 409,475 411,497 380,508", "#555450"],
  ["380,508 411,497 411,660 380,662", "#887591"],
  ["452,668 620,700 620,778 452,838", "#857090"],
  ["620,700 975,770 975,850 862,830 620,778", "#f2f5ff"],
  ["452,838 620,778 980,850 980,965 862,922", "#ccd0e6"],
  ["583,828 685,792 980,850 980,908 862,884", "#ccd0e6"],
  ["583,828 862,884 862,894 583,835", "#ffffff"],
];

const tower: Face[] = [
  ["1014,748 1113,715 1113,785 1014,760", "#f2f5ff"],
  ["516,64 620,37 1137,144 1137,148 1012,182 960,160 908,172 516,92", "#545351"],
  ["1014,182 1137,146 1137,758 1113,753 1113,715 1014,748", "#241d1f"],
  ["410,70 463,80 465,104 908,194 908,172 962,183 962,768 410,660", "#424240"],
  ["465,104 516,88 908,170 908,196", "#52514f"],
  ["410,70 463,52 516,64 463,80", "#565553"],
  ["463,80 516,66 516,88 465,104", "#302325"],
  ["908,172 962,155 1014,166 962,183", "#565553"],
  ["962,183 1014,168 1014,750 962,772", "#5b0808"],
];

const tray: Face[] = [
  ["160,943 452,838 862,922 760,960 760,990 625,1038", "#e32424"],
  ["158,756 214,738 214,888 397,828 397,675 448,657 448,840 160,942", "#564d05"],
  ["214,872 358,820 393,828 214,888", "#e6e626"],
  ["118,748 158,756 158,943 625,1038 625,1067 118,962", "#a5a51c"],
  ["118,748 178,730 214,738 158,756", "#e6e626"],
  ["360,668 397,675 397,828 360,820", "#a8a81e"],
  ["360,668 412,650 448,657 397,675", "#ccd0e6"],
  ["625,1038 760,990 760,1020 625,1067", "#857090"],
  ["380,883 448,860 448,878 383,902", "#6d0c0c"],
  ["380,893 466,908 466,928 383,912", "#8f1212"],
  ["494,915 636,943 636,963 494,935", "#8f1212"],
  ["808,995 965,942 985,945 985,1034", "#ccd0e6"],
  ["760,960 850,927 911,935 808,968", "#ccd0e6"],
  ["760,960 808,968 808,995 985,1034 985,1068 760,1020", "#e9eaf8"],
  ["863,768 911,780 911,935 863,922", "#f4f6ff"],
  ["863,768 912,752 962,762 911,780", "#ccd0e6"],
  ["911,780 962,765 962,942 808,995 808,968 911,935", "#5b0808"],
];

const gantry: Face[] = [
  ["328,140 455,166 395,190 328,220", "#a8a81e"],
  ["328,140 350,132 470,157 450,166", "#e6e626"],
  ["360,268 470,203 810,88 928,75 930,310 675,330 675,525 365,628", "#221b1d"],
  ["278,252 405,185 470,203 360,268", "#a09f93"],
  ["405,185 725,70 810,88 470,203", "#50504e"],
  ["725,70 842,57 928,75 810,88", "#464644"],
  ["237,234 314,208 314,233 278,252 275,467 237,458", "#292223"],
  ["237,458 262,450 275,467", "#4c4c4a"],
  ["237,545 275,552 275,593 237,603", "#241d1f"],
  ["75,202 150,175 314,208 237,234", "#545351"],
  ["75,202 237,234 237,458 275,467 278,252 360,268 362,295 435,308 435,450 362,440 362,488 435,500 435,585 362,573 362,628 275,610 275,550 237,545 237,603 75,570", "url(#slab)"],
  ["362,295 425,276 497,289 435,308", "#555452"],
  ["435,308 497,289 497,430 435,450", "#262021"],
  ["362,488 597,412 660,425 435,500", "#4c4c4a"],
  ["435,500 660,425 675,430 675,502 435,585", "#231c1e"],
  ["497,289 570,263 616,272 497,312", "#e32424"],
  ["497,312 616,272 616,400 480,443 497,430", "#5b0808"],
];

const bench: Face[] = [
  ["678,362 735,378 735,408 678,425", "#ccd0e6"],
  ["735,376 810,388 735,412", "#f4f6ff"],
  ["677,318 780,287 1015,333 1045,378 848,337 826,382 677,360", "#a91c1c"],
  ["780,287 820,270 1060,318 1015,333", "#e32424"],
  ["1015,333 1060,318 1106,390 1046,410 1042,375", "#f0524e"],
  ["848,337 1042,377 1047,412 1035,422 830,378", "#88efec"],
  ["582,462 830,378 1035,422 790,510", "url(#mesh)"],
  ["572,472 582,462 790,510 780,518", "#88efec"],
  ["605,498 630,505 630,597 605,603", "#857090"],
  ["1048,445 1085,432 1085,538 1048,533", "#f4f6ff"],
  ["572,472 780,518 783,642 750,635 750,530 605,498 605,604 572,600", "#5fa3a1"],
  ["782,515 1035,422 1050,408 1106,390 1108,530 1085,538 1085,432 808,528 808,635 783,642", "#857090"],
  ["898,500 928,490 928,496 905,502", "#333333"],
];

// Model coordinates are in thirds of a pixel; one row of the tower repeats every 88 units.
function Model() {
  return (
    <svg viewBox="304 72 800 666" role="img" aria-label="AS-2512C1 三维模型" className="h-[666px] w-[800px] shrink-0">
      <defs>
        <linearGradient id="slab" x1="0" y1="0" x2="1" y2="1">
          <stop offset="0" stopColor="#494947" />
          <stop offset="1" stopColor="#333331" />
        </linearGradient>
        <pattern id="mesh" width="20" height="15" patternUnits="userSpaceOnUse" patternTransform="rotate(14) skewX(24)">
          <rect width="20" height="15" fill="#3f7f80" />
          <path d="M0 0l10 8L20 0M0 15l10 8 10-8" fill="none" stroke="#10191b" strokeWidth="5" />
          <path d="M0 6l10 8 10-8" fill="none" stroke="#84e4e2" strokeWidth="2.500" />
          <path d="M17 8v5" stroke="#d3b9cd" strokeWidth="3" />
        </pattern>
      </defs>
      <g transform="translate(340 160) scale(.333333)" stroke="#0c0c0c" strokeWidth="3.600" strokeLinejoin="round">
        <polyline points="28,943 1630,1275 2215,1075 2010,1032" fill="none" stroke="#1c1c0a" strokeWidth="4.500" strokeDasharray="16 1" />
        <path d="M28 943L118 912" fill="none" />
        {faces(rearParts)}
        {faces(tower)}
        {[0, 88, 176, 264, 352, 440].map((y) => (
          <g key={y} transform={`translate(0 ${y})`}>
            <polygon points="439,127 566,153 439,199" fill="#2b2122" />
            <polygon points="566,153 935,230 935,299 439,199" fill="#52514f" />
          </g>
        ))}
        {faces(tray)}
        <path d="M452 838l410 84" strokeWidth="7" />
        <g transform="translate(900 570)">
          {faces(gantry)}
          {faces(bench)}
        </g>
      </g>
      <g fontFamily="Liberation Serif, serif" fontSize="11">
        <path d="M345 679v-22" stroke="#1a1acc" strokeWidth="3.500" />
        <path d="M345 651l4.500 9h-9z" fill="#1a1acc" />
        <path d="M346 679l10-3" stroke="#124d12" strokeWidth="3" />
        <path d="M353 674l9-3.500-1 7-6 2z" fill="#176117" />
        <path d="M345 679.500l16 3.500" stroke="#a51212" strokeWidth="3.500" />
        <path d="M360 678.500l9 6-11 3z" fill="#d01f1f" />
        <text x="340" y="650" fill="#1515ff">Z</text>
        <text x="361" y="675" fill="#0c850c">Y</text>
        <text x="366" y="689" fill="#e81010">X</text>
      </g>
    </svg>
  );
}

function Viewport() {
  return (
    <section className="flex min-w-0 flex-1 flex-col overflow-hidden bg-white">
      <div className="flex h-8 shrink-0 items-center justify-end pr-1.5">
        <div className="flex items-center opacity-90">
          {viewTools.map((t) => (
            <div key={t.icon} className="flex items-center">
              <button type="button" aria-label={t.icon} className="flex w-[26px] justify-center">
                <Icon name={t.icon} />
              </button>
              {t.menu && (
                <button type="button" aria-label={`${t.icon} menu`} className="flex w-3.5 justify-center">
                  <Caret dim />
                </button>
              )}
            </div>
          ))}
        </div>
        <div className="ml-[101px] flex">
          {docButtons.map((n) => (
            <button key={n} type="button" aria-label={n} className="flex w-[26px] justify-center">
              <Icon name={n} />
            </button>
          ))}
        </div>
      </div>
      <div className="flex min-h-0 flex-1 justify-between">
        <Model />
        <nav aria-label="任务窗格" className="mt-3.5 flex h-[193px] w-[26px] shrink-0 flex-col border-t border-l border-[#8c8c8c]">
          {taskTabs.map((n) => (
            <button
              key={n}
              type="button"
              aria-label={n}
              className={clsx(
                "flex h-6 items-center justify-center border-b border-[#8c8c8c]",
                n === "ball" ? "bg-white" : "bg-[#d4d4d4]"
              )}
            >
              <Icon name={n} />
            </button>
          ))}
        </nav>
      </div>
    </section>
  );
}

function ModelTabs() {
  const steps = ["M4 3v8M12 3v8L6 7z", "M11 3v8L5 7z", "M5 3v8l6-4z", "M12 3v8M4 3v8l6-4z"];

  return (
    <div className="flex h-[15px] shrink-0 border-x border-[#8fb3b8] bg-[#f7f7f7] text-xs leading-[14px] text-black">
      <div className="w-[26px]" />
      {steps.map((d) => (
        <button key={d} type="button" aria-label="滚动标签" disabled className="flex w-4 items-center justify-center border border-[#b5b5b5] border-t-[#333] bg-[#a9a9a9]">
          <svg viewBox="0 0 16 14" aria-hidden="true" className="h-3.5 w-4 shrink-0"><path d={d} fill="#858585" stroke="#858585" /></svg>
        </button>
      ))}
      <button type="button" className="w-[47px] border-r border-[#8c8c8c] bg-[#f7f7f7] pl-1">模型</button>
      <button type="button" className="w-[57px] border-t border-r border-[#8c8c8c] bg-[#d4d4d4] leading-3">3D 视图</button>
      <button type="button" className="w-20 border-t border-r border-[#8c8c8c] bg-[#d4d4d4] pr-2 leading-3">运动算例 1</button>
      <div className="flex-1 border-t border-[#8c8c8c]" />
    </div>
  );
}

function StatusBar() {
  return (
    <footer className="flex h-[19px] shrink-0 items-center border-t border-[#8c8c8c] bg-[#f7f7f7] pt-0.5 font-['DejaVu_Sans','Noto_Sans_CJK_SC',sans-serif] text-xs leading-4 text-black">
      <span className="pl-px">SOLIDWORKS Premium 2016 x64 版</span>
      <span className="ml-auto h-4 w-2 border-x border-[#ccc]" />
      <span className="w-[75px] border-r border-[#ccc] text-center">在编辑 零件</span>
      <span className="h-4 w-4 border-r border-[#ccc]" />
      <button type="button" className="flex w-[116px] items-center justify-center gap-3">
        <span>MMGS</span>
        <Caret dir="up" />
      </button>
      <button type="button" aria-label="标签" className="ml-[37px] flex">
        <Icon name="tag" className="size-4" />
      </button>
      <svg viewBox="0 0 12 12" aria-hidden="true" className="ml-3 size-3" fill="#bbb">
        <path d="M9 1h2v2H9zM5 5h2v2H5zM9 5h2v2H9zM1 9h2v2H1zM5 9h2v2H5zM9 9h2v2H9z" />
      </svg>
    </footer>
  );
}

export default function App() {
  return (
    <div className="flex h-screen min-h-[780px] w-full rounded-lg border border-[#2b2829] bg-[linear-gradient(#969294_0,#a8a5a6_7px,#dcdadb_8px,#c9c7c8_194px,#938f90_196px,#9b9798_100%)] p-1.5 font-['Noto_Sans','Noto_Sans_CJK_SC',sans-serif]">
      <div className="flex min-w-0 flex-1 flex-col border border-[#4c4a4b] bg-[#f7f7f7]">
        <TitleBar />
        <main className="flex min-h-0 flex-1">
          <ToolColumn tools={featureTools} label="特征" />
          <div className="ml-px flex min-w-0 flex-1 flex-col">
            <div className="flex min-h-0 flex-1">
              <FeaturePanel />
              <Viewport />
            </div>
            <ModelTabs />
          </div>
          <div className="flex pl-0.5">
            <ToolColumn tools={sketchTools} label="草图" />
          </div>
        </main>
        <StatusBar />
      </div>
    </div>
  );
}
